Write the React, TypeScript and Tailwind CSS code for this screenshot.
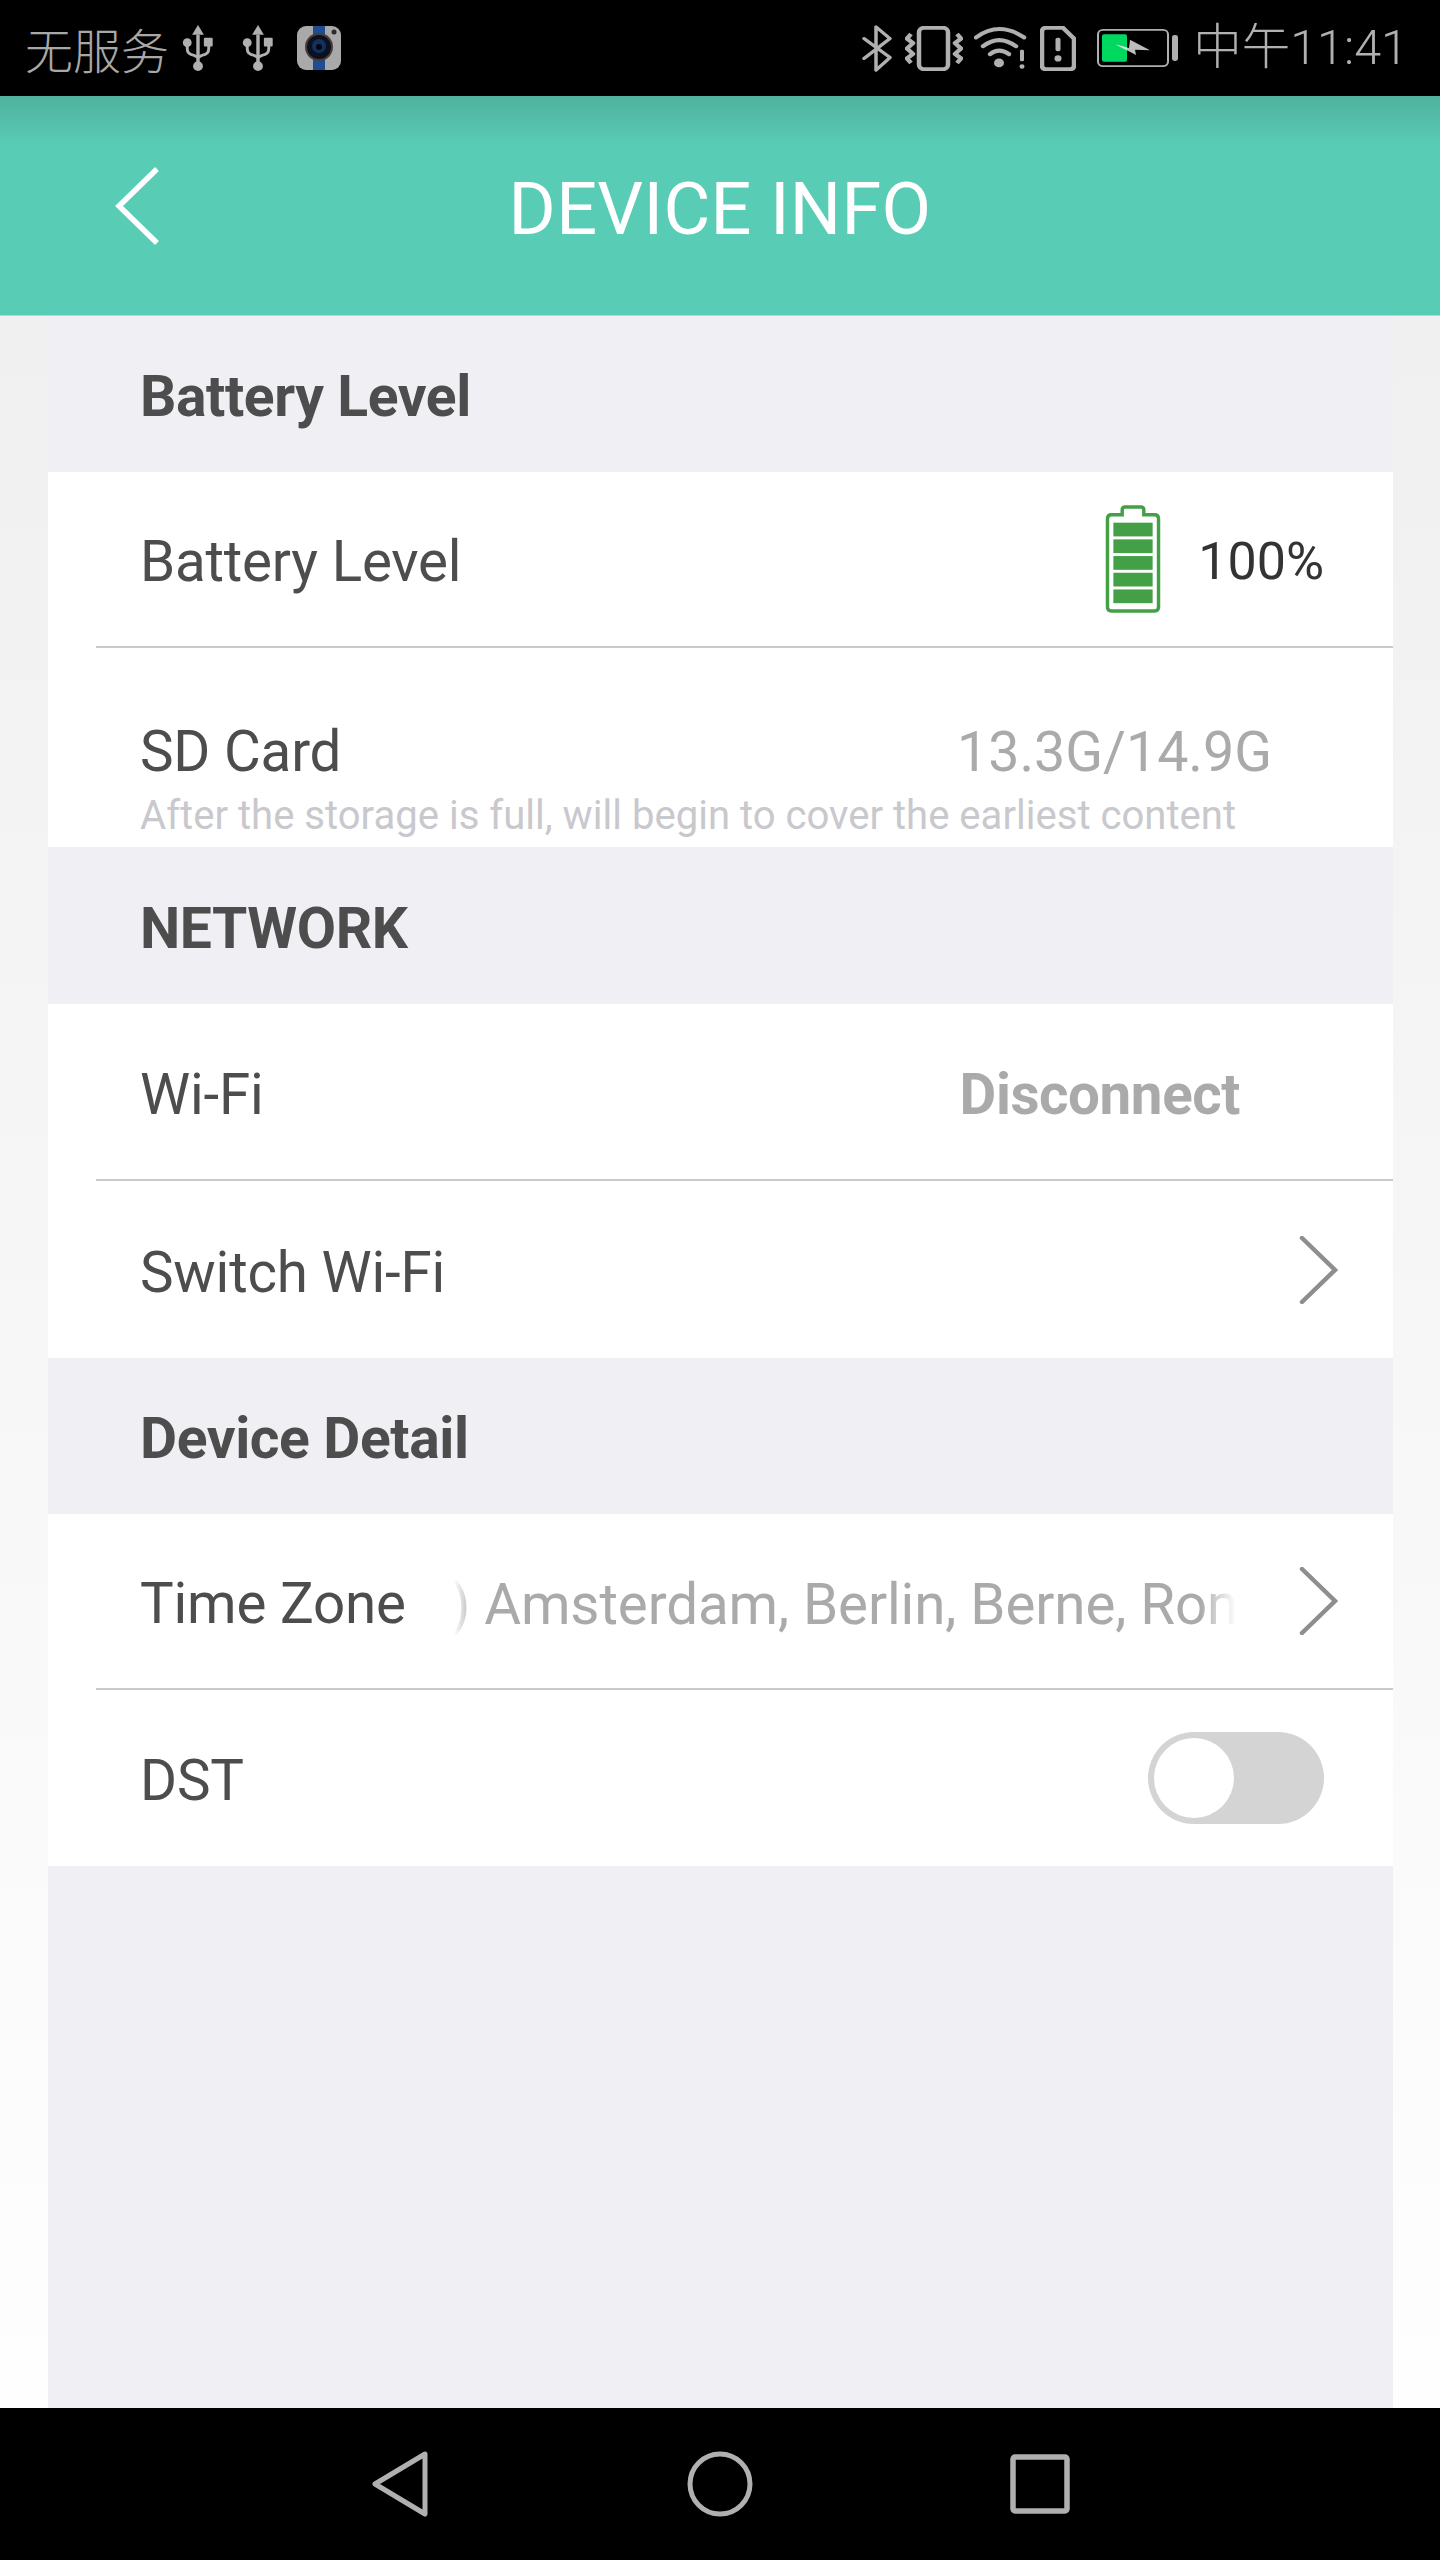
const Chevron = () => (
  <svg width="40" height="68" viewBox="0 0 40 68" className="shrink-0">
    <path d="M3 2 L36 34 L3 66" fill="none" stroke="#8e8e8e" strokeWidth="4.5" strokeLinecap="round" strokeLinejoin="miter" />
  </svg>
);

const Usb = () => (
  <svg width="32" height="47" viewBox="0 0 32 48" className="shrink-0">
    <path d="M16 10 V38" stroke="#b0b0b0" strokeWidth="3.5" fill="none" />
    <path d="M16 0 L22 10 H10 Z" fill="#b0b0b0" />
    <circle cx="16" cy="42" r="5" fill="#b0b0b0" />
    <circle cx="5" cy="18" r="4.5" fill="#b0b0b0" />
    <rect x="22" y="13" width="9" height="9" rx="1" fill="#b0b0b0" />
    <path d="M5 20 V24 Q5 30 12 31 L16 33 L20 31 Q27 30 27 24 V20" stroke="#b0b0b0" strokeWidth="3" fill="none" />
  </svg>
);

const CameraApp = () => (
  <svg width="44" height="44" viewBox="0 0 44 44" className="shrink-0 ml-[23px]">
    <rect width="44" height="44" rx="9" fill="#a9a9a9" />
    <rect x="16" width="12" height="44" fill="#1c4e92" />
    <circle cx="22" cy="21" r="14" fill="#4a3d38" />
    <circle cx="22" cy="21" r="12" fill="#0b1120" />
    <circle cx="22" cy="20" r="7" fill="#12305c" />
    <circle cx="22" cy="21" r="3" fill="#05070d" />
    <circle cx="37" cy="6" r="2.5" fill="#2b2b2b" />
  </svg>
);

const StatusRight = () => (
  <div className="flex items-center">
    <svg width="30" height="47" viewBox="0 0 30 52" preserveAspectRatio="none" className="shrink-0">
      <path d="M2 15 L28 36 L14 50 V2 L28 15 L2 37" fill="none" stroke="#b0b0b0" strokeWidth="3.5" strokeLinecap="round" strokeLinejoin="round" />
    </svg>
    <svg width="58" height="45" viewBox="0 0 58 50" preserveAspectRatio="none" className="shrink-0 ml-[13px]">
      <rect x="14" y="2" width="29" height="46" rx="5" fill="none" stroke="#b0b0b0" strokeWidth="4.5" />
      <path d="M6 9 L2 14 L8 19 L2 25 L8 31 L2 36 L6 41" fill="none" stroke="#b0b0b0" strokeWidth="4.5" strokeLinejoin="round" />
      <path d="M52 9 L56 14 L50 19 L56 25 L50 31 L56 36 L52 41" fill="none" stroke="#b0b0b0" strokeWidth="4.5" strokeLinejoin="round" />
    </svg>
    <svg width="54" height="44" viewBox="0 0 54 50" preserveAspectRatio="none" className="shrink-0 ml-[11px]">
      <path d="M2 13 Q25 -6 50 13" fill="none" stroke="#b0b0b0" strokeWidth="4.5" strokeLinecap="round" />
      <path d="M9 23 Q25 9 42 23" fill="none" stroke="#b0b0b0" strokeWidth="4.5" strokeLinecap="round" />
      <path d="M16 32 Q25 24 35 32" fill="none" stroke="#b0b0b0" strokeWidth="4.5" strokeLinecap="round" />
      <circle cx="25" cy="42" r="5" fill="#b0b0b0" />
      <rect x="46" y="27" width="4" height="13" rx="1.5" fill="#b0b0b0" />
      <circle cx="48" cy="46" r="2.5" fill="#b0b0b0" />
    </svg>
    <svg width="36" height="45" viewBox="0 0 36 50" preserveAspectRatio="none" className="shrink-0 ml-[12px]">
      <path d="M6 2 H23 L34 14 V44 Q34 48 30 48 H6 Q2 48 2 44 V6 Q2 2 6 2 Z" fill="none" stroke="#b0b0b0" strokeWidth="4.5" />
      <rect x="15.5" y="13" width="5" height="15" rx="2" fill="#b0b0b0" />
      <circle cx="18" cy="36" r="3.5" fill="#b0b0b0" />
    </svg>
    <svg width="82" height="38" viewBox="0 0 82 44" preserveAspectRatio="none" className="shrink-0 ml-[21px]">
      <rect x="1" y="1" width="70" height="42" rx="5" fill="none" stroke="#b0b0b0" strokeWidth="2" />
      <rect x="5" y="6" width="25" height="32" rx="2" fill="#00d95f" />
      <path d="M18.7 18 L32 22 L33 12.4 L53 24.7 L38 24 L39 30 Z" fill="#bcbcbc" />
      <path d="M18.7 18 L30 21.4 L30 24.7 Z" fill="#cfe9d8" />
      <rect x="75" y="7" width="6" height="30" rx="2.5" fill="#b0b0b0" />
    </svg>
    <span className="ml-[14px] text-[48.5px] leading-none text-[#b0b0b0] font-['Roboto','Noto_Sans_CJK_SC',sans-serif] font-light">中午11:41</span>
  </div>
);

const headerText = "flex items-center pl-[92px] text-[57px] font-bold text-[#4d4d4d] tracking-[-0.4px]";

const Divider = () => <div className="h-[2px] bg-[#c8c8ce] ml-[48px]" />;

const Label = ({ children }: { children: React.ReactNode }) => (
  <span className="text-[56.5px] leading-none text-[#4d4d4d] tracking-[-0.2px] mt-[7px]">{children}</span>
);

export default function App() {
  return (
    <div className="w-[1440px] h-[2560px] flex flex-col font-['Roboto',sans-serif] bg-gradient-to-b from-[#eeeeee] to-[#ffffff]">
      <div className="h-[96px] shrink-0 bg-black flex items-center justify-between pl-[25px] pr-[32px]">
        <div className="flex items-center">
          <span className="text-[48px] leading-none text-[#a8a8a8] font-['Noto_Sans_CJK_SC',sans-serif] font-light">无服务</span>
          <span className="ml-[13px]"><Usb /></span>
          <span className="ml-[28px]"><Usb /></span>
          <CameraApp />
        </div>
        <StatusRight />
      </div>

      <div className="h-[220px] shrink-0 bg-[linear-gradient(#4fb29f,#59ccb6_50px)] border-b border-[#c8ccca] flex items-center justify-center relative">
        <svg width="46" height="80" viewBox="0 0 46 80" className="absolute left-[115px] top-[70px]">
          <path d="M42 3 L4 40 L42 77" fill="none" stroke="#ffffff" strokeWidth="5.5" />
        </svg>
        <span className="text-[72px] leading-none text-white tracking-[0.3px] mt-[8px]">DEVICE INFO</span>
      </div>

      <div className="flex-1 mx-[48px] w-[1345px] bg-[#efeff4] flex flex-col">
        <div className={`h-[156px] pt-[6px] ${headerText}`}>Battery Level</div>
        <div className="bg-white h-[375px] flex flex-col">
          <div className="h-[174px] flex items-center justify-between pl-[92px] pr-[69px]">
            <Label>Battery Level</Label>
            <div className="flex items-center">
              <svg width="56" height="108" viewBox="0 0 56 110">
                <path d="M17 10 V5 Q17 2 20 2 H36 Q39 2 39 5 V10 H50 Q54 10 54 14 V104 Q54 108 50 108 H6 Q2 108 2 104 V14 Q2 10 6 10 Z" fill="none" stroke="#43a047" strokeWidth="3.5" />
                <rect x="8" y="18" width="40" height="14" fill="#43a047" />
                <rect x="8" y="35" width="40" height="14" fill="#43a047" />
                <rect x="8" y="52" width="40" height="14" fill="#43a047" />
                <rect x="8" y="69" width="40" height="14" fill="#43a047" />
                <rect x="8" y="86" width="40" height="14" fill="#43a047" />
              </svg>
              <span className="ml-[37px] text-[52px] leading-none text-[#333333] mt-[6px]">100%</span>
            </div>
          </div>
          <Divider />
          <div className="flex-1 flex flex-col pl-[92px] pt-[69px] overflow-hidden">
            <div className="flex justify-between items-center pr-[121px]">
              <Label>SD Card</Label>
              <span className="text-[55.5px] leading-none text-[#aaaaaa] mt-[7px]">13.3G/14.9G</span>
            </div>
            <div className="mt-[15px] text-[40.1px] leading-none text-[#c8c8cd] whitespace-nowrap">After the storage is full, will begin to cover the earliest content</div>
          </div>
        </div>

        <div className={`h-[157px] pt-[6px] ${headerText}`}>NETWORK</div>
        <div className="bg-white">
          <div className="h-[175px] flex items-center justify-between pl-[92px] pr-[153px]">
            <Label>Wi-Fi</Label>
            <span className="text-[56.5px] leading-none font-bold text-[#aaaaaa] tracking-[-0.4px] mt-[7px]">Disconnect</span>
          </div>
          <Divider />
          <div className="h-[177px] flex items-center justify-between pl-[92px] pr-[54px]">
            <Label>Switch Wi-Fi</Label>
            <Chevron />
          </div>
        </div>

        <div className={`h-[156px] pt-[6px] ${headerText}`}>Device Detail</div>
        <div className="bg-white">
          <div className="h-[174px] flex items-center pl-[92px] pr-[54px]">
            <Label>Time Zone</Label>
            <div className="relative ml-[48px] w-[782px] overflow-hidden whitespace-nowrap mt-[7px]">
              <div className="-ml-[315px] text-[56.5px] leading-[70px] text-[#aaaaaa] tracking-[-0.1px]">(GMT+01:00) Amsterdam, Berlin, Berne, Rome, Stockholm, Vienna</div>
              <div className="absolute left-0 top-0 bottom-0 w-[20px] bg-gradient-to-r from-white to-transparent" />
              <div className="absolute right-0 top-0 bottom-0 w-[36px] bg-gradient-to-l from-white to-transparent" />
            </div>
            <div className="ml-auto"><Chevron /></div>
          </div>
          <Divider />
          <div className="h-[176px] flex items-center justify-between pl-[92px] pr-[69px]">
            <Label>DST</Label>
            <div className="w-[176px] h-[92px] rounded-full bg-[#d4d4d4] flex items-center pl-[6px]">
              <div className="w-[80px] h-[80px] rounded-full bg-white" />
            </div>
          </div>
        </div>
      </div>

      <div className="h-[152px] shrink-0 bg-black flex items-center justify-between pl-[371px] pr-[370px]">
        <svg width="58" height="68" viewBox="0 0 58 68">
          <path d="M54 4 L4 34 L54 64 Z" fill="none" stroke="#b0b0b0" strokeWidth="5" strokeLinejoin="round" />
        </svg>
        <svg width="66" height="66" viewBox="0 0 66 66">
          <circle cx="33" cy="33" r="30" fill="none" stroke="#b0b0b0" strokeWidth="5" />
        </svg>
        <svg width="60" height="60" viewBox="0 0 60 60">
          <rect x="3" y="3" width="54" height="54" rx="2" fill="none" stroke="#b0b0b0" strokeWidth="5.5" />
        </svg>
      </div>
    </div>
  );
}
